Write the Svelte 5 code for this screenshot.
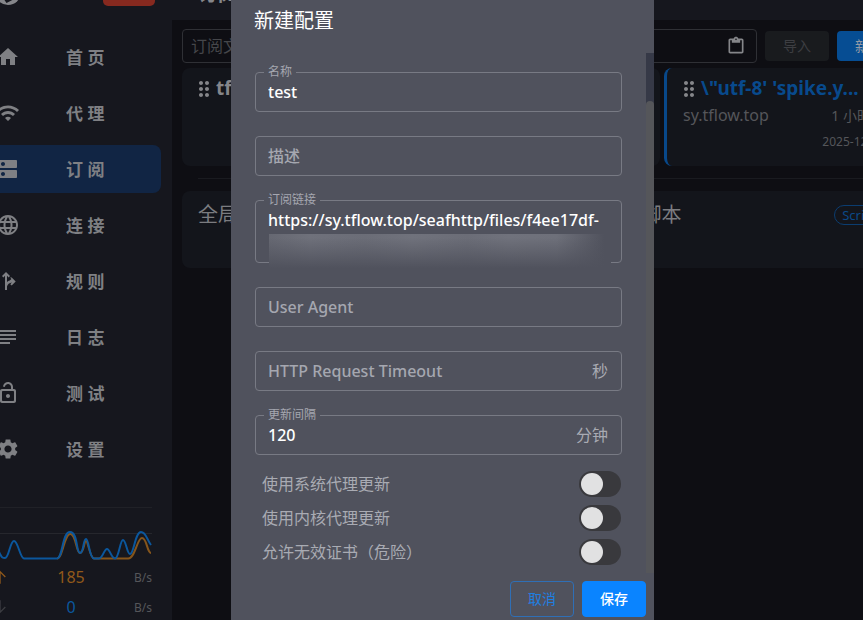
<script>
  const navItems = [
    { label: '首 页', icon: 'home' },
    { label: '代 理', icon: 'wifi' },
    { label: '订 阅', icon: 'dns', active: true },
    { label: '连 接', icon: 'globe' },
    { label: '规 则', icon: 'fork' },
    { label: '日 志', icon: 'subject' },
    { label: '测 试', icon: 'lock' },
    { label: '设 置', icon: 'settings' }
  ];

  const icons = {
    home: 'M10 20v-6h4v6h5v-8h3L12 3 2 12h3v8z',
    wifi: 'm1 9 2 2c4.97-4.97 13.03-4.97 18 0l2-2C16.93 2.93 7.08 2.93 1 9m8 8 3 3 3-3c-1.65-1.66-4.34-1.66-6 0m-4-4 2 2c2.76-2.76 7.24-2.76 10 0l2-2C15.14 9.14 8.87 9.14 5 13',
    dns: 'M20 13H4c-.55 0-1 .45-1 1v6c0 .55.45 1 1 1h16c.55 0 1-.45 1-1v-6c0-.55-.45-1-1-1M7 19c-1.1 0-2-.9-2-2s.9-2 2-2 2 .9 2 2-.9 2-2 2M20 3H4c-.55 0-1 .45-1 1v6c0 .55.45 1 1 1h16c.55 0 1-.45 1-1V4c0-.55-.45-1-1-1M7 9c-1.1 0-2-.9-2-2s.9-2 2-2 2 .9 2 2-.9 2-2 2',
    globe: 'M11.99 2C6.47 2 2 6.48 2 12s4.47 10 9.99 10C17.52 22 22 17.52 22 12S17.52 2 11.99 2m6.93 6h-2.95c-.32-1.25-.78-2.45-1.38-3.56 1.84.63 3.37 1.91 4.33 3.56M12 4.04c.83 1.2 1.48 2.53 1.91 3.96h-3.82c.43-1.43 1.08-2.76 1.91-3.96M4.26 14C4.1 13.36 4 12.69 4 12s.1-1.36.26-2h3.38c-.08.66-.14 1.32-.14 2s.06 1.34.14 2zm.82 2h2.95c.32 1.25.78 2.45 1.38 3.56-1.84-.63-3.37-1.9-4.33-3.56m2.95-8H5.08c.96-1.66 2.49-2.93 4.33-3.56C8.81 5.55 8.35 6.75 8.03 8M12 19.96c-.83-1.2-1.48-2.53-1.91-3.96h3.82c-.43 1.43-1.08 2.76-1.91 3.96M14.34 14H9.66c-.09-.66-.16-1.32-.16-2s.07-1.35.16-2h4.68c.09.65.16 1.32.16 2s-.07 1.34-.16 2m.25 5.56c.6-1.11 1.06-2.31 1.38-3.56h2.95c-.96 1.65-2.49 2.93-4.33 3.56M16.36 14c.08-.66.14-1.32.14-2s-.06-1.34-.14-2h3.38c.16.64.26 1.31.26 2s-.1 1.36-.26 2z',
    fork: 'm14 8.5 1.41 1.41L13.7 11.6c-1 .3-1.9.7-2.7 1.4V6.8l1.6 1.6L14 7l-4-4-4 4 1.4 1.4L9 6.8V21h2v-3.5c.6-2.1 2.2-3.6 4.9-3.9l-1.6 1.6 1.4 1.4 4-4-4-4z',
    subject: 'M14 17H4v2h10zm6-8H4v2h16zM4 15h16v-2H4zM4 5v2h16V5z',
    lock: 'M12 17c1.1 0 2-.9 2-2s-.9-2-2-2-2 .9-2 2 .9 2 2 2m6-9h-1V6c0-2.76-2.24-5-5-5-2.28 0-4.27 1.54-4.84 3.75-.14.54.18 1.08.72 1.22.53.14 1.08-.18 1.22-.72C9.44 3.93 10.63 3 12 3c1.65 0 3 1.35 3 3v2H6c-1.1 0-2 .9-2 2v10c0 1.1.9 2 2 2h12c1.1 0 2-.9 2-2V10c0-1.1-.9-2-2-2m0 11c0 .55-.45 1-1 1H7c-.55 0-1-.45-1-1v-8c0-.55.45-1 1-1h10c.55 0 1 .45 1 1z',
    settings: 'M19.14 12.94c.04-.3.06-.61.06-.94s-.02-.64-.07-.94l2.03-1.58c.18-.14.23-.41.12-.61l-1.92-3.32c-.12-.22-.37-.29-.59-.22l-2.39.96c-.5-.38-1.03-.7-1.62-.94l-.36-2.54c-.04-.24-.24-.41-.48-.41h-3.84c-.24 0-.43.17-.47.41l-.36 2.54c-.59.24-1.13.57-1.62.94l-2.39-.96c-.22-.08-.47 0-.59.22L2.74 8.87c-.12.21-.08.47.12.61l2.03 1.58c-.05.3-.09.63-.09.94s.02.64.07.94l-2.03 1.58c-.18.14-.23.41-.12.61l1.92 3.32c.12.22.37.29.59.22l2.39-.96c.5.38 1.03.7 1.62.94l.36 2.54c.05.24.24.41.48.41h3.84c.24 0 .44-.17.47-.41l.36-2.54c.59-.24 1.13-.56 1.62-.94l2.39.96c.22.08.47 0 .59-.22l1.92-3.32c.12-.22.07-.47-.12-.61zM12 15.6c-1.98 0-3.6-1.62-3.6-3.6s1.62-3.6 3.6-3.6 3.6 1.62 3.6 3.6-1.62 3.6-3.6 3.6',
    paste: 'M19 3h-4.18C14.4 1.84 13.3 1 12 1s-2.4.84-2.82 2H5c-1.1 0-2 .9-2 2v14c0 1.1.9 2 2 2h14c1.1 0 2-.9 2-2V5c0-1.1-.9-2-2-2m-7 0c.55 0 1 .45 1 1s-.45 1-1 1-1-.45-1-1 .45-1 1-1m7 16H5V5h2v3h10V5h2z',
    drag: 'M11 18c0 1.1-.9 2-2 2s-2-.9-2-2 .9-2 2-2 2 .9 2 2m-2-8c-1.1 0-2 .9-2 2s.9 2 2 2 2-.9 2-2-.9-2-2-2m0-6c-1.1 0-2 .9-2 2s.9 2 2 2 2-.9 2-2-.9-2-2-2m6 4c1.1 0 2-.9 2-2s-.9-2-2-2-2 .9-2 2 .9 2 2 2m0 2c-1.1 0-2 .9-2 2s.9 2 2 2 2-.9 2-2-.9-2-2-2m0 6c-1.1 0-2 .9-2 2s.9 2 2 2 2-.9 2-2-.9-2-2-2'
  };

  let form = $state({
    name: 'test',
    desc: '',
    url: 'https://sy.tflow.top/seafhttp/files/f4ee17df-',
    userAgent: '',
    timeout: '',
    interval: '120'
  });

  const fields = [
    { key: 'name', label: '名称' },
    { key: 'desc', label: '描述' },
    { key: 'url', label: '订阅链接', multiline: true },
    { key: 'userAgent', label: 'User Agent' },
    { key: 'timeout', label: 'HTTP Request Timeout', unit: '秒' },
    { key: 'interval', label: '更新间隔', unit: '分钟' }
  ];

  let switches = $state([
    { id: 'with-proxy', label: '使用系统代理更新', on: false },
    { id: 'self-proxy', label: '使用内核代理更新', on: false },
    { id: 'invalid-certs', label: '允许无效证书（危险）', on: false }
  ]);
</script>

{#snippet icon(name, size = 24)}
  <svg width={size} height={size} viewBox="0 0 24 24" fill="currentColor" aria-hidden="true">
    <path d={icons[name]} />
  </svg>
{/snippet}

<div class="app">
  <header class="topbar">
    <div class="brand">
      <svg class="logo" width="28" height="28" viewBox="0 0 28 28" aria-hidden="true">
        <circle cx="14" cy="14" r="13" fill="#85868a" />
        <path d="M8 16l5 7 6-3" fill="none" stroke="#16171e" stroke-width="3" />
      </svg>
      <button class="update-btn" aria-label="更新"></button>
    </div>
    <h1>订阅</h1>
  </header>

  <div class="columns">
    <aside class="sidebar">
      <nav>
        {#each navItems as item}
          <a class="nav-item" class:active={item.active} href="#{item.icon}">
            {@render icon(item.icon)}
            <span>{item.label}</span>
          </a>
        {/each}
      </nav>

      <div class="traffic">
        <svg class="graph" viewBox="-8 0 160 32" aria-hidden="true">
          <path d="M-8 3.5H152" stroke="#26272d" />
          <path
            d="M57 28.5C63 28 64 5 70 4S76 23 80 23 84 11 86 11 90 28 94 28.5H128C135 29 137 8 142 8S147 23 151 23"
            stroke="#85551b" />
          <path
            d="M-8 28C-3 14-2 20 0 24S3 28 5 28C9 28 10 11 14 11S20 28 24 28.5H57C63 28 62 2 70 2S76 23 80 23 83 9 86 9 89 28 94 28.5H99C103 28 104 19 107 19S111 28 115 28.5C119 28 120 10 123 10S127 24 130 24C134 24 135 2 141 2 146 2 147 10 151 15"
            stroke="#0b579d" />
        </svg>
        <div class="rate up">
          <svg width="16" height="16" viewBox="0 0 24 24" aria-hidden="true">
            <path d="M12 22V4M4 12l8-8 8 8" />
          </svg>
          <span class="value">185</span>
          <span class="unit">B/s</span>
        </div>
        <div class="rate down">
          <svg width="16" height="16" viewBox="0 0 24 24" aria-hidden="true">
            <path d="M12 2v18M4 12l8 8 8-8" />
          </svg>
          <span class="value">0</span>
          <span class="unit">B/s</span>
        </div>
      </div>
    </aside>

    <main class="content">
      <div class="toolbar">
        <div class="url-box">
          <input type="text" placeholder="订阅文件链接" aria-label="订阅文件链接" />
          <button class="paste" aria-label="粘贴">{@render icon('paste', 20)}</button>
        </div>
        <button class="tool-btn" disabled>导入</button>
        <button class="tool-btn primary">新建</button>
      </div>

      <section class="profiles">
        <article class="card">
          <div class="card-title">{@render icon('drag')}<strong>tflow</strong></div>
        </article>
        <article class="card"></article>
        <article class="card selected">
          <div class="card-title">{@render icon('drag')}<strong>\"utf-8' 'spike.y...</strong></div>
          <div class="card-meta"><span>sy.tflow.top</span><span class="ago">1 小时前</span></div>
          <div class="card-date">2025-12-18</div>
        </article>
      </section>

      <hr />

      <section class="extensions">
        <article class="card ext"><h2>全局扩展覆写配置</h2></article>
        <article class="card ext">
          <h2>全局扩展脚本</h2>
          <span class="chip">Script</span>
        </article>
      </section>
    </main>
  </div>
</div>

<div class="overlay">
  <div class="dialog" role="dialog" aria-labelledby="dialog-title">
    <h2 id="dialog-title">新建配置</h2>

    <div class="dialog-body">
      <form id="profile-form">
        {#each fields as field}
          <div class="field" class:filled={form[field.key] !== ''}>
            {#if field.multiline}
              <textarea id={field.key} rows="2" spellcheck="false" bind:value={form[field.key]}></textarea>
              <div class="redacted"></div>
            {:else}
              <input id={field.key} type="text" bind:value={form[field.key]} />
            {/if}
            <label for={field.key}>{field.label}</label>
            {#if field.unit}
              <span class="suffix">{field.unit}</span>
            {/if}
          </div>
        {/each}

        <div class="switches">
          {#each switches as item}
            <div class="switch-row">
              <label for={item.id}>{item.label}</label>
              <input id={item.id} type="checkbox" role="switch" bind:checked={item.on} />
            </div>
          {/each}
        </div>
      </form>
      <div class="scrollbar"><div class="thumb"></div></div>
    </div>

    <footer>
      <button class="cancel">取消</button>
      <button class="save">保存</button>
    </footer>
  </div>
</div>

<style>
  :global(body) {
    background: #0e0e13;
    overflow: hidden;
  }

  .app,
  .overlay {
    font-family: 'Noto Sans', 'Noto Sans CJK SC', sans-serif;
  }

  .app :global(*),
  .overlay :global(*) {
    box-sizing: border-box;
  }

  button,
  input,
  textarea {
    font: inherit;
    margin: 0;
  }

  h1,
  h2 {
    margin: 0;
    font-weight: 400;
  }

  svg {
    flex: none;
    display: block;
  }

  .app {
    display: flex;
    flex-direction: column;
    height: 100vh;
    overflow: hidden;
  }

  .topbar {
    display: flex;
    align-items: flex-end;
    flex: none;
    height: 20px;
    padding-bottom: 14px;
    background: #16171e;
    color: #85868a;
  }

  .brand {
    display: flex;
    align-items: flex-end;
    justify-content: space-between;
    width: 204px;
    padding-right: 43px;
    margin-left: -6px;
  }

  .update-btn {
    width: 52px;
    height: 24px;
    padding: 0;
    border: none;
    border-radius: 5px;
    background: #86291f;
  }

  .topbar h1 {
    font-size: 20px;
    font-weight: 700;
    line-height: 24px;
  }

  .columns {
    display: flex;
    flex: 1;
    min-height: 0;
  }

  .sidebar {
    flex: none;
    width: 200px;
    margin-left: -28px;
    padding-top: 13px;
    background: #16171e;
  }

  nav {
    display: flex;
    flex-direction: column;
    gap: 8px;
    padding: 0 11px 0 8px;
  }

  .nav-item {
    display: flex;
    align-items: center;
    gap: 46px;
    height: 48px;
    padding-left: 16px;
    border-radius: 8px;
    color: #7f8084;
    font-size: 17px;
    font-weight: 700;
    text-decoration: none;
  }

  .nav-item span {
    padding-bottom: 2px;
  }

  .nav-item.active {
    background: #112544;
  }

  .traffic {
    margin: 34px 20px 0;
    border-top: 1px solid #202127;
    padding-top: 22px;
  }

  .graph {
    width: 100%;
    height: 32px;
    fill: none;
  }

  .graph path {
    stroke-width: 2;
  }

  .graph path:first-child {
    stroke-width: 1;
  }

  .rate {
    display: flex;
    align-items: center;
    height: 30px;
  }

  .rate svg {
    fill: none;
    stroke: currentColor;
    stroke-width: 2;
  }

  .rate .value {
    flex: 1;
    text-align: center;
    font-size: 16px;
  }

  .rate .unit {
    color: #55565a;
    font-size: 12px;
  }

  .up {
    color: #91591a;
  }

  .down svg {
    color: #3c3d42;
  }

  .down .value {
    color: #0b579d;
  }

  .content {
    flex: 1;
    min-width: 0;
    margin-right: -48px;
    padding: 9px 10px;
  }

  .toolbar {
    display: flex;
    align-items: center;
    gap: 8px;
  }

  .url-box {
    display: flex;
    align-items: center;
    flex: 1;
    height: 34px;
    padding: 0 10px 0 8px;
    border: 1px solid #2f3035;
    border-radius: 4px;
  }

  .url-box input {
    flex: 1;
    min-width: 0;
    padding: 0;
    border: none;
    background: none;
    color: #85868a;
    font-size: 16px;
  }

  .url-box input::placeholder {
    color: #45464a;
    opacity: 1;
  }

  .paste {
    padding: 0;
    border: none;
    background: none;
    color: #85868a;
  }

  .tool-btn {
    flex: none;
    width: 64px;
    height: 30px;
    padding: 0 0 2px;
    border: none;
    border-radius: 4px;
    background: #191b1e;
    color: #3d3e42;
    font-size: 14px;
  }

  .tool-btn.primary {
    background: #064d93;
    color: #929aa6;
  }

  .profiles {
    display: grid;
    grid-template-columns: repeat(3, 1fr);
    gap: 4px;
    margin-top: 5px;
  }

  .card {
    border-radius: 8px;
    background: #13151b;
    color: #55565a;
  }

  .profiles .card {
    height: 98px;
    padding: 7px 16px 8px 10px;
  }

  .profiles .selected {
    border-left: 3px solid #08488a;
  }

  .card-title {
    display: flex;
    align-items: center;
    height: 27px;
    color: #85868a;
    font-size: 19px;
  }

  .card-title strong {
    padding-bottom: 2px;
    white-space: nowrap;
  }

  .selected strong {
    color: #084a8d;
  }

  .card-meta {
    display: flex;
    justify-content: space-between;
    align-items: center;
    height: 26px;
    padding-left: 6px;
    font-size: 16px;
  }

  .ago {
    font-size: 14px;
  }

  .card-date {
    text-align: right;
    font-size: 12px;
    line-height: 28px;
  }

  hr {
    margin: 12px 16px;
    border: none;
    border-top: 1px solid #1a1b20;
  }

  .extensions {
    display: grid;
    grid-template-columns: repeat(2, 1fr);
    gap: 8px;
  }

  .ext {
    display: flex;
    justify-content: space-between;
    align-items: flex-start;
    height: 77px;
    padding: 12px 16px;
  }

  .ext h2 {
    color: #7b7c80;
    font-size: 20px;
    line-height: 24px;
    white-space: nowrap;
  }

  .chip {
    height: 20px;
    margin-top: 2px;
    padding: 0 7px;
    border: 1px solid #0b3d70;
    border-radius: 10px;
    color: #0b4988;
    font-size: 13px;
    line-height: 18px;
  }

  .overlay {
    position: fixed;
    inset: 0;
    display: flex;
    justify-content: center;
    padding-left: 22px;
  }

  .dialog {
    display: flex;
    flex-direction: column;
    width: 423px;
    background: #50525d;
    color: #fff;
  }

  .dialog h2 {
    padding: 5px 24px 16px 23px;
    font-size: 20px;
    line-height: 32px;
  }

  .dialog-body {
    display: flex;
    flex: 1;
    min-height: 0;
    overflow: hidden;
  }

  form {
    display: flex;
    flex-direction: column;
    flex: 1;
    gap: 24px;
    padding: 19px 24px 0;
  }

  .field {
    position: relative;
    display: flex;
    align-items: center;
    border: 1px solid #787a84;
    border-radius: 4px;
  }

  .field input,
  .field textarea {
    flex: 1;
    min-width: 0;
    padding: 7px 12px;
    border: none;
    outline: none;
    background: none;
    color: #fff;
    font-size: 16px;
    font-weight: 500;
    line-height: 24px;
    resize: none;
    overflow: hidden;
  }

  .field input {
    height: 38px;
  }

  .field textarea {
    height: 61px;
  }

  .field label {
    position: absolute;
    top: 7px;
    left: 8px;
    padding: 0 4px;
    color: #a5a7b0;
    font-size: 16px;
    font-weight: 500;
    line-height: 24px;
    pointer-events: none;
  }

  .filled label {
    top: -9px;
    background: #50525d;
    font-size: 12px;
    font-weight: 400;
    line-height: 16px;
  }

  .suffix {
    padding: 0 13px 2px 0;
    color: #a9abb3;
    font-size: 16px;
  }

  /* masks the private part of the link */
  .redacted {
    position: absolute;
    top: 33px;
    left: 13px;
    right: 10px;
    height: 36px;
    background:
      linear-gradient(to bottom, transparent 10%, #50525d 95%),
      linear-gradient(to right, #666872, #6f717b 12%, #6b6d77 28%, #70727c 42%, #6b6d77 58%, #70727c 70%, #6e707a 84%, #50525d 98%);
  }

  .switches {
    margin-top: -12px;
  }

  .switch-row {
    display: flex;
    align-items: center;
    justify-content: space-between;
    height: 34px;
    padding: 0 1px 0 7px;
    color: #a9abb3;
    font-size: 16px;
  }

  .switch-row label {
    padding-bottom: 2px;
  }

  .switch-row input {
    appearance: none;
    width: 42px;
    height: 26px;
    padding: 2px;
    border-radius: 13px;
    background: #39393d;
  }

  .switch-row input::before {
    content: '';
    display: block;
    width: 22px;
    height: 22px;
    border-radius: 50%;
    background: #e1e1e2;
  }

  .switch-row input:checked {
    background: #0a84ff;
  }

  .switch-row input:checked::before {
    margin-left: auto;
  }

  .scrollbar {
    flex: none;
    width: 8px;
    padding-top: 48px;
    background: #363947;
  }

  .thumb {
    height: 100%;
    border-radius: 4px 4px 0 0;
    background: #55565a;
  }

  footer {
    display: flex;
    justify-content: flex-end;
    gap: 8px;
    padding: 8px 8px 3px;
  }

  footer button {
    width: 64px;
    height: 36px;
    padding: 0 0 2px;
    border: 1px solid #2f6fb6;
    border-radius: 4px;
    background: none;
    color: #1f7fe0;
    font-size: 14px;
  }

  footer .save {
    border-color: #0a84ff;
    background: #0a84ff;
    color: #fff;
    font-weight: 500;
  }
</style>
